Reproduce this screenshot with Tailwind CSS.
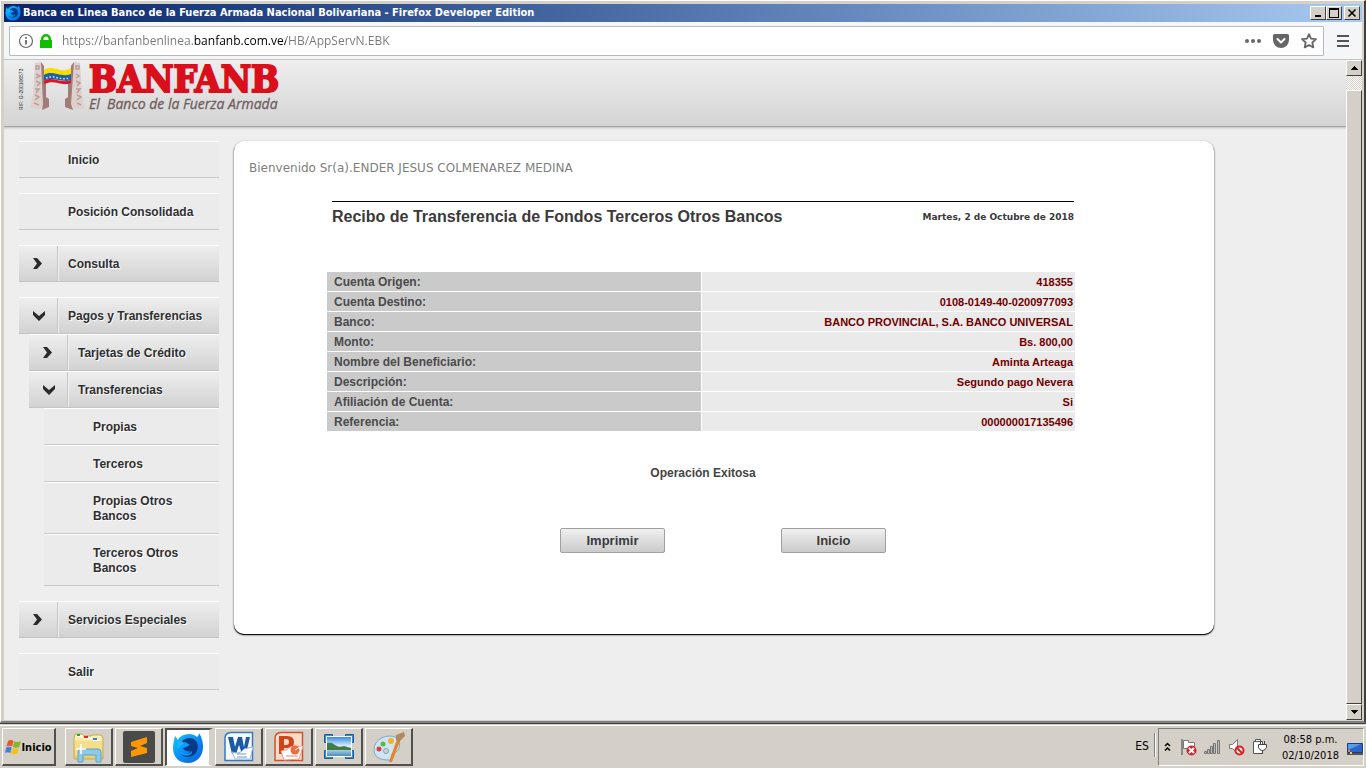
<!DOCTYPE html>
<html lang="es">
<head>
<meta charset="utf-8">
<title>Banca en Linea Banco de la Fuerza Armada Nacional Bolivariana</title>
<script src="https://cdn.jsdelivr.net/npm/@tailwindcss/browser@4"></script>
</head>
<body class="flex h-screen flex-col overflow-hidden bg-[#d4d0c8] font-['Liberation_Sans',sans-serif] text-[#2f2f2f]">
<svg width="0" height="0" class="absolute" aria-hidden="true">
  <defs>
    <linearGradient id="ffb" x1="0" y1="0" x2="1" y2="1"><stop offset="0" stop-color="#19c8ff"/><stop offset=".5" stop-color="#0a8df5"/><stop offset="1" stop-color="#0560d8"/></linearGradient>
    <linearGradient id="folder" x1="0" y1="0" x2="0" y2="1"><stop offset="0" stop-color="#fdf3bb"/><stop offset="1" stop-color="#e9cb62"/></linearGradient>
    <linearGradient id="sky" x1="0" y1="0" x2="0" y2="1"><stop offset="0" stop-color="#2f86e0"/><stop offset=".5" stop-color="#e4f3fb"/><stop offset="1" stop-color="#3f87b5"/></linearGradient>
    <symbol id="firefox" viewBox="0 0 32 32">
      <path fill="url(#ffb)" d="M3 4c1 1 2 2 2.500 4C8 4 12 2 17 2c3 0 6 1 8 3 1-1 2-2 2-4 3 4 4 9 4 14 0 9-6 16-15 16S1 25 1 16c0-4 1-8 2-12z"/>
      <path fill="#073a86" d="M10 9c4-4 11-4 14 0 3 4 2 10-1 13-4 4-11 4-14 0 4 1 8 0 9-3-3 1-6-1-7-3 2-1 5-1 6-3-3 0-5-2-7-4z"/>
      <path fill="#0ba0f8" d="M13 10l5 3-4 1-5 2c0-3 1-5 4-6zM8 19c3 4 9 4 12 0 1 4-7 7-12 2z"/>
      <path fill="#14b6ff" d="M6 8l6 3-5 5-2 1c0-3 0-6 1-9z"/>
    </symbol>
    <symbol id="chev" viewBox="0 0 9 11"><path fill="#2b2b2b" d="M0 0h4l5 5.500L4 11H0l4-5.500z"/></symbol>
    <symbol id="chevdown" viewBox="0 0 12 10"><path fill="#2b2b2b" d="M0 0v4l6 6 6-6V0L6 5z"/></symbol>
  </defs>
</svg>

<div class="flex min-h-0 flex-1 flex-col border-b border-[#404040]">
 <div class="flex min-h-0 flex-1 flex-col border-t border-l border-r-2 border-b-2 border-t-white border-l-white border-r-[#404040] border-b-[#808080] pt-[3px] pr-[2px] pb-px pl-[3px]">
  <!-- title bar -->
  <div class="flex h-[18px] shrink-0 items-center gap-[2px] bg-linear-to-r from-[#0a246a] to-[#a6caf0] pr-[2px] pl-px">
    <svg class="size-4"><use href="#firefox"/></svg>
    <h1 class="flex-1 truncate font-['DejaVu_Sans_Condensed','DejaVu_Sans',sans-serif] text-[11px] font-bold text-white">Banca en Linea Banco de la Fuerza Armada Nacional Bolivariana - Firefox Developer Edition</h1>
    <div class="flex">
      <button aria-label="Minimizar" class="flex h-[14px] w-4 items-center justify-center border border-t-white border-l-white border-r-[#404040] border-b-[#404040] bg-[#d4d0c8]"><svg width="12" height="10"><path d="M3 7h6v2H3z"/></svg></button>
      <button aria-label="Restaurar" class="flex h-[14px] w-4 items-center justify-center border border-t-white border-l-white border-r-[#404040] border-b-[#404040] bg-[#d4d0c8]"><svg width="12" height="10"><path fill-rule="evenodd" d="M1 0h10v10H1zM2 2v7h8V2z"/></svg></button>
      <button aria-label="Cerrar" class="ml-[2px] flex h-[14px] w-4 items-center justify-center border border-t-white border-l-white border-r-[#404040] border-b-[#404040] bg-[#d4d0c8]"><svg width="12" height="10"><path stroke="#000" stroke-width="1.600" d="M2.500 1.500l7 7m0-7l-7 7"/></svg></button>
    </div>
  </div>
  <!-- navigation bar -->
  <div class="flex h-[38px] shrink-0 items-center border-b border-[#c4c4c4] bg-[#f5f6f8] pr-[13px] pl-[5px]">
    <div class="flex h-[30px] flex-1 items-center rounded-[1px] border border-[#b8babc] bg-white pr-2 pl-[7px]">
      <svg class="ml-px size-4" viewBox="0 0 16 16" fill="none" stroke="#6a6a6a"><circle cx="8" cy="8" r="6.500" stroke-width="1.200"/><path stroke-width="1.800" d="M8 7v4.500M8 4v1.800"/></svg>
      <svg class="ml-1 size-4" viewBox="0 0 16 16"><path fill="#12bc00" d="M2 7h1V6a5 5 0 0 1 10 0v1h1v8H2zM5.500 7h5V6a2.500 2.500 0 0 0-5 0z"/></svg>
      <input aria-label="Dirección" class="ml-2 flex-1 bg-[linear-gradient(90deg,#777_132px,#000_132px,#000_224px,#777_224px)] bg-clip-text font-['Open_Sans',sans-serif] text-[12px] leading-5 text-transparent outline-none" value="https://banfanbenlinea.banfanb.com.ve/HB/AppServN.EBK">
      <button aria-label="Acciones de página"><svg width="16" height="16" fill="#666"><circle cx="2" cy="8" r="2"/><circle cx="8" cy="8" r="2"/><circle cx="14" cy="8" r="2"/></svg></button>
      <button aria-label="Guardar en Pocket" class="ml-3"><svg width="16" height="16"><path fill="#666" d="M1.500 1h13A1.500 1.500 0 0 1 16 2.500V7A8 8 0 0 1 0 7V2.500A1.500 1.500 0 0 1 1.500 1z"/><path fill="none" stroke="#fff" stroke-width="2" stroke-linecap="round" stroke-linejoin="round" d="M4.500 6L8 9.500 11.500 6"/></svg></button>
      <button aria-label="Añadir a marcadores" class="ml-3 -mr-[2px]"><svg width="16" height="16"><path fill="none" stroke="#666" stroke-width="1.800" stroke-linejoin="round" d="M8 1.200l2 4.500 5 .5-3.700 3.300 1 4.900L8 12l-4.300 2.400 1-4.900L1 6.200l5-.5z"/></svg></button>
    </div>
    <button aria-label="Abrir menú" class="ml-[13px]"><svg width="12" height="12"><path fill="#555" d="M0 0h12v2H0zM0 5h12v2H0zM0 10h12v2H0z"/></svg></button>
  </div>

  <!-- page -->
  <div class="flex min-h-0 flex-1">
    <div class="min-w-0 flex-1 overflow-hidden bg-[#eee]">
      <header class="flex h-[67px] items-start border-b border-[#a5a5a5] bg-linear-to-b from-[#eee] to-[#d4d4d4] pl-[14px] shadow-[0_1px_2px_#bbb]">
        <a href="#" class="flex pt-[2px]" aria-label="BANFANB, El Banco de la Fuerza Armada">
          <svg width="66" height="50" viewBox="0 0 66 50">
            <text transform="translate(5 48) rotate(-90)" font-size="5" fill="#222">RIF: G-200106573</text>
            <path fill="#ddd0cd" d="M17 1l6-1 2 3 3 39-2 5-14-1 3-12z"/>
            <path fill="#ddd0cd" d="M62 1l-6-1-3 3-3 39 3 5 13-1-2-12z"/>
            <path fill="#a07b78" d="M23 0l3 4v15l2 2v14l3 2v8l-7 3 1-6z"/>
            <path fill="#a07b78" d="M56 0l-3 4v15l-3 2v14l-3 2v8l8 3-2-6z"/>
            <g fill="none" stroke="#b89f9c" stroke-width="1.500"><path d="M18 4h3v3h-3zM18 12l4 2-4 2M18 19l4 2-3 3M17 27h4l-3 4M17 33l4 2-4 3M16 41l5 2"/><path d="M58 4h3v3h-3zM58 12l3 2-3 2M58 19l4 2-3 3M58 27h4l-3 4M59 33l4 2-4 3M59 41l4 2"/></g>
            <path fill="#f9dd00" d="M26 8c4-3 8-2 13-1 5 2 9 2 14-1v7c-4 2-9 1-13 0s-9-2-14 1z"/>
            <path fill="#1b63ae" d="M26 13c4-3 9-2 13-1 5 1 9 2 14 0v6c-5 2-9 0-13 0-5-1-9-2-14 1z"/>
            <path fill="#dc1526" d="M26 19c4-3 9-2 13-1 5 1 9 2 14 0v3c-5 2-9 1-13 0-5-1-9-1-14 1z"/>
            <path fill="none" stroke="#e4edf8" stroke-width="1.500" stroke-dasharray="1.500 2" d="M28 16c6-2 9-1 12 0 4 1 8 1 12 0"/>
          </svg>
          <span class="flex flex-col pl-[5px]">
            <span class="font-['DejaVu_Serif_Condensed','DejaVu_Serif',serif] text-[37px] leading-[35px] font-bold text-[#d90f1c] [-webkit-text-stroke:2px_#d90f1c]">BANFANB</span>
            <span class="font-['Open_Sans',sans-serif] text-[14px] leading-[14px] whitespace-pre text-[#705d5d] italic [-webkit-text-stroke:0.3px_#705d5d]">El  Banco de la Fuerza Armada</span>
          </span>
        </a>
      </header>

      <div class="flex items-start gap-[15px] pt-[14px] pr-4 pl-[15px]">
        <nav class="flex w-[200px] shrink-0 flex-col gap-[15px] text-[12px] leading-[15px] font-bold [text-shadow:1px_1px_1px_#fff]" aria-label="Principal">
          <a href="#" class="block border-t border-b border-t-white border-b-[#c8c8c8] bg-[#ebebeb] pt-[11px] pb-[9px] pl-[49px]">Inicio</a>
          <a href="#" class="block border-t border-b border-t-white border-b-[#c8c8c8] bg-[#ebebeb] pt-[11px] pb-[9px] pl-[49px]">Posición Consolidada</a>
          <a href="#" class="flex border-t border-b border-t-white border-b-[#c4c4c4] bg-linear-to-b from-[#eee] to-[#d2d2d2]"><span class="flex w-[39px] items-center border-r border-[#c8c8c8] pl-[14px]"><svg class="h-[11px] w-[9px]"><use href="#chev"/></svg></span><span class="border-l border-[#eee] pt-[11px] pb-[9px] pl-[9px]">Consulta</span></a>
          <div>
            <a href="#" class="flex border-t border-b border-t-white border-b-[#c4c4c4] bg-linear-to-b from-[#eee] to-[#d2d2d2]"><span class="flex w-[39px] items-center border-r border-[#c8c8c8] pl-[14px]"><svg class="h-[10px] w-3"><use href="#chevdown"/></svg></span><span class="border-l border-[#eee] pt-[11px] pb-[9px] pl-[9px]">Pagos y Transferencias</span></a>
            <div class="ml-[10px]">
              <a href="#" class="flex border-t border-b border-t-white border-b-[#c4c4c4] bg-linear-to-b from-[#eee] to-[#d2d2d2]"><span class="flex w-[39px] items-center border-r border-[#c8c8c8] pl-[14px]"><svg class="h-[11px] w-[9px]"><use href="#chev"/></svg></span><span class="border-l border-[#eee] pt-[11px] pb-[9px] pl-[9px]">Tarjetas de Crédito</span></a>
              <a href="#" class="flex border-t border-b border-t-white border-b-[#c4c4c4] bg-linear-to-b from-[#eee] to-[#d2d2d2]"><span class="flex w-[39px] items-center border-r border-[#c8c8c8] pl-[14px]"><svg class="h-[10px] w-3"><use href="#chevdown"/></svg></span><span class="border-l border-[#eee] pt-[11px] pb-[9px] pl-[9px]">Transferencias</span></a>
              <div class="ml-[15px]">
                <a href="#" class="block border-t border-b border-t-white border-b-[#c8c8c8] bg-[#ebebeb] pt-[11px] pr-7 pb-[9px] pl-[49px]">Propias</a>
                <a href="#" class="block border-t border-b border-t-white border-b-[#c8c8c8] bg-[#ebebeb] pt-[11px] pr-7 pb-[9px] pl-[49px]">Terceros</a>
                <a href="#" class="block border-t border-b border-t-white border-b-[#c8c8c8] bg-[#ebebeb] pt-[11px] pr-7 pb-[9px] pl-[49px]">Propias Otros Bancos</a>
                <a href="#" class="block border-t border-b border-t-white border-b-[#c8c8c8] bg-[#ebebeb] pt-[11px] pr-7 pb-[9px] pl-[49px]">Terceros Otros Bancos</a>
              </div>
            </div>
          </div>
          <a href="#" class="flex border-t border-b border-t-white border-b-[#c4c4c4] bg-linear-to-b from-[#eee] to-[#d2d2d2]"><span class="flex w-[39px] items-center border-r border-[#c8c8c8] pl-[14px]"><svg class="h-[11px] w-[9px]"><use href="#chev"/></svg></span><span class="border-l border-[#eee] pt-[11px] pb-[9px] pl-[9px]">Servicios Especiales</span></a>
          <a href="#" class="block border-t border-b border-t-white border-b-[#c8c8c8] bg-[#ebebeb] pt-[11px] pb-[9px] pl-[49px]">Salir</a>
        </nav>

        <main class="max-w-[980px] flex-1 rounded-[10px] bg-white px-[15px] pt-5 pb-[81px] shadow-[0_1px_0_#111,0_1px_2px_#222]">
          <p class="font-['DejaVu_Sans',sans-serif] text-[12px] leading-[14px] text-[#808080]">Bienvenido Sr(a).ENDER JESUS COLMENAREZ MEDINA</p>
          <div class="mt-[26px] mr-[124px] ml-[78px]">
            <div class="mr-px ml-[5px] flex items-center justify-between border-t border-black pt-[5px] text-[#3a3a3a]">
              <h2 class="text-[16px] leading-5 font-bold">Recibo de Transferencia de Fondos Terceros Otros Bancos</h2>
              <p class="font-['DejaVu_Sans',sans-serif] text-[9px] leading-5 font-bold">Martes, 2 de Octubre de 2018</p>
            </div>
            <table class="mt-[45px] w-full table-fixed border-collapse text-[12px] leading-[18px] font-bold">
              <tbody class="[&_td]:bg-[#eaeaea] [&_td]:pt-px [&_td]:pr-[2px] [&_td]:text-right [&_td]:text-[11px] [&_td]:text-[#700000] [&_th]:border-r [&_th]:border-r-white [&_th]:bg-[#cacaca] [&_th]:pt-px [&_th]:pl-[7px] [&_th]:text-left [&_th]:text-[#4a4a4a] [&_tr]:border-b [&_tr]:border-white">
                <tr><th scope="row">Cuenta Origen:</th><td>418355</td></tr>
                <tr><th scope="row">Cuenta Destino:</th><td>0108-0149-40-0200977093</td></tr>
                <tr><th scope="row">Banco:</th><td>BANCO PROVINCIAL, S.A. BANCO UNIVERSAL</td></tr>
                <tr><th scope="row">Monto:</th><td>Bs. 800,00</td></tr>
                <tr><th scope="row">Nombre del Beneficiario:</th><td>Aminta Arteaga</td></tr>
                <tr><th scope="row">Descripción:</th><td>Segundo pago Nevera</td></tr>
                <tr><th scope="row">Afiliación de Cuenta:</th><td>Si</td></tr>
                <tr><th scope="row">Referencia:</th><td>000000017135496</td></tr>
              </tbody>
            </table>
            <p class="mt-[31px] pl-1 text-center text-[12px] leading-5 font-bold text-[#444]">Operación Exitosa</p>
            <div class="mt-[45px] flex justify-center gap-[116px] pl-[44px]">
              <button class="h-[25px] w-[105px] rounded-[2px] border border-[#a0a0a0] bg-linear-to-b from-[#f0f0f0] to-[#cbcbcb] text-[13px] font-bold text-[#3a3a3a]">Imprimir</button>
              <button class="h-[25px] w-[105px] rounded-[2px] border border-[#a0a0a0] bg-linear-to-b from-[#f0f0f0] to-[#cbcbcb] text-[13px] font-bold text-[#3a3a3a]">Inicio</button>
            </div>
          </div>
        </main>
      </div>
    </div>
    <!-- scroll bar -->
    <div class="flex w-4 shrink-0 flex-col bg-[repeating-conic-gradient(#fff_0_25%,#d4d0c8_0_50%)] bg-size-[2px_2px]">
      <button aria-label="Subir" class="flex h-4 items-center justify-center border border-t-white border-l-white border-r-[#404040] border-b-[#404040] bg-[#d4d0c8]"><svg width="7" height="4"><path d="M3 0h1v1h1v1h1v1h1v1H0V3h1V2h1V1h1z"/></svg></button>
      <div class="mt-[14px] flex-1 border border-t-white border-l-white border-r-[#404040] border-b-[#404040] bg-[#d4d0c8]"></div>
      <button aria-label="Bajar" class="flex h-4 items-center justify-center border border-t-white border-l-white border-r-[#404040] border-b-[#404040] bg-[#d4d0c8]"><svg width="7" height="4"><path d="M0 0h7v1H6v1H5v1H4v1H3V3H2V2H1V1H0z"/></svg></button>
    </div>
  </div>
 </div>
</div>

<!-- task bar -->
<footer class="mt-px flex h-[43px] shrink-0 items-start border-t border-white pt-[2px] pr-[2px] pl-[2px] font-['DejaVu_Sans_Condensed','DejaVu_Sans',sans-serif] text-[11px]">
  <button class="flex h-[38px] w-[54px] items-center justify-center border border-t-white border-l-white border-r-2 border-b-2 border-r-[#505050] border-b-[#505050] pt-1 font-bold text-black">
    <svg width="16" height="16" class="mb-1"><path fill="#e8562a" d="M3 2c2-1.500 4-1 5.500 0L7 7.500C5.500 6.500 3.500 6.500 1.500 7.500z"/><path fill="#82b928" d="M9.300 2.200c2 1 4 1 6.700 0L14.300 8c-2 1-4 1-6.500 0z"/><path fill="#3d82d8" d="M1.200 8.500c2-1 4-1 5.500 0L5.300 14C3.800 13 2 13 0 14z"/><path fill="#f9bd1c" d="M7.500 8.900c2 1 4 1 6.500 0L12.500 14.500c-2 1-4 1-6.500 0z"/></svg>Inicio</button>
  <div class="ml-[9px] flex gap-[2px] [&>button]:flex [&>button]:h-[38px] [&>button]:w-12 [&>button]:items-center [&>button]:justify-center">
    <button aria-label="Explorador" class="border border-t-white border-l-white border-r-2 border-b-2 border-r-[#505050] border-b-[#505050]"><svg width="34" height="32"><path fill="url(#folder)" stroke="#c9a94e" d="M2 7l1-4h7l1 2h8l1-1h9l2 3v21H2z"/><path fill="#fff" d="M5 4h6v2H5zM13 6h7v2h-7zM21 8h7v2h-7z"/><path fill="#1fae2d" d="M5 3h3v2H5z"/><path fill="#d93025" d="M12 5h4v2h-4z"/><path fill="#2a86e0" d="M21 7h4v2h-4z"/><path fill="#f6df8b" d="M3 10h27v14H3z"/><path fill="#8fc9e8" stroke="#5ba3cc" d="M6 31V21q0-3 3-3h17q3 0 3 3v10h-5v-7H11v7z"/><path stroke="#fff" stroke-width="1.500" d="M4 18h10M9 13v10"/></svg></button>
    <button aria-label="Sublime Text" class="border border-t-white border-l-white border-r-2 border-b-2 border-r-[#505050] border-b-[#505050]"><svg width="32" height="32"><rect width="32" height="32" rx="2" fill="#4a4a4a"/><path fill="#ff9800" d="M8 11l16-5v6l-7 3 7 2v5L8 26v-6l7-3-7-2z"/></svg></button>
    <button aria-label="Firefox Developer Edition" class="border-t-2 border-r-4 border-b border-l-2 border-t-[#505050] border-r-[#d4d0c8] border-b-white border-l-[#505050] bg-white"><svg class="size-8"><use href="#firefox"/></svg></button>
    <button aria-label="Word" class="border border-t-white border-l-white border-r-2 border-b-2 border-r-[#505050] border-b-[#505050]"><svg width="32" height="32"><path fill="#f5f9fd" stroke="#3a77bd" stroke-width="1.500" d="M8 1.500h21.500v28H2V7q0-5 6-5.500z"/><path fill="#1c5aa8" d="M5 6h5l2 10 3-10h4l2 10 2-10h4l-4 17h-4l-3-9-3 9H9z"/><path fill="#fff" stroke="#9ab6d8" d="M9 21q8 3 12-3l9-2-3 12H12z"/><path stroke="#7796bf" d="M14 23h9M14 26h10"/></svg></button>
    <button aria-label="PowerPoint" class="border border-t-white border-l-white border-r-2 border-b-2 border-r-[#505050] border-b-[#505050]"><svg width="32" height="32"><path fill="#fbdccd" stroke="#d0522b" stroke-width="1.500" d="M8 1.500h21.500v28H2V7q0-5 6-5.500z"/><path fill="#cd4519" fill-rule="evenodd" d="M6 5h8q7 0 7 6t-7 6h-3v6H6zM11 8v6h2q3 0 3-3t-3-3z"/><path fill="#fff" stroke="#e3a48e" d="M8 20q6 0 9-4l13-1-4 13-15 1z"/><circle cx="22" cy="19" r="4.500" fill="#ea6c40"/><path stroke="#fff" d="M22 19l5-3"/><path stroke="#e38b6c" d="M13 25h12"/></svg></button>
    <button aria-label="Visor de imágenes" class="border border-t-white border-l-white border-r-2 border-b-2 border-r-[#505050] border-b-[#505050]"><svg width="32" height="32"><path fill="#3f8bcb" stroke="#1f5c96" d="M1.500 3.500h8v4h-4v4h-4zM22.500 3.500h8v8h-4v-4h-4zM1.500 19.500h4v4h4v4h-8zM26.500 19.500h4v8h-8v-4h4z"/><path fill="url(#sky)" stroke="#fff" d="M3.500 5.500h25v20h-25z"/><path fill="#3f7d45" d="M4 12q5-1 8 2t9 1l7 2v2H4z"/></svg></button>
    <button aria-label="Paint" class="border border-t-white border-l-white border-r-2 border-b-2 border-r-[#505050] border-b-[#505050]"><svg width="34" height="32"><path fill="#cfe5f3" stroke="#7ea6c2" d="M2 19C2 10 10 5 18 5s11 6 9 12-5 2-7 6 1 6-4 6C8 29 2 26 2 19z"/><circle cx="7" cy="18" r="2.500" fill="#d9403a"/><circle cx="11" cy="13" r="2.500" fill="#58b947"/><circle cx="19" cy="10" r="3" fill="#f0b323"/><circle cx="14" cy="20" r="2.500" fill="#d4d0c8" stroke="#7ea6c2"/><path fill="#e8822a" d="M25 8l3 2-8 21-3 0z"/><path fill="#b08a5e" d="M24 4l8-3 1 4-6 6-3-2z"/></svg></button>
  </div>
  <span class="ml-auto pt-[9px] pr-[5px] text-[12px] text-black">ES</span>
  <div class="mt-[5px] h-6 w-[2px] border-l border-[#808080] bg-white"></div>
  <div class="ml-[2px] flex h-[38px] items-center border border-t-[#808080] border-l-[#808080] border-r-white border-b-white pl-[5px] text-black">
    <button aria-label="Mostrar iconos ocultos"><svg width="7" height="10"><path fill="none" stroke="#000" stroke-width="1.500" d="M1 4l2.500-2.500L6 4M1 8.500L3.500 6 6 8.500"/></svg></button>
    <svg class="ml-[9px]" width="17" height="18"><path fill="#888" d="M1 1h2v16H1z"/><path fill="#fff" stroke="#777" d="M3.500 2.500h5v2h6v7h-6v-1h-5z"/><circle cx="11.500" cy="12.500" r="5" fill="#d8232a"/><path stroke="#fff" stroke-width="2" d="M9 10l5 5m0-5l-5 5"/></svg>
    <svg class="ml-[7px]" width="17" height="16"><path fill="#b8b8b8" stroke="#777" d="M.5 12.500h2v2h-2zM3.500 10.500h2v4h-2zM6.500 7.500h2v7h-2zM9.500 4.500h2v10h-2zM13.500 1.500h2v13h-2z"/></svg>
    <svg class="ml-[7px]" width="18" height="18"><path fill="#fff" stroke="#777" d="M1.500 6.500h3l5-5v14l-5-5h-3z"/><circle cx="11.500" cy="12.500" r="4" fill="#fff" stroke="#e01b1b" stroke-width="2"/><path stroke="#e01b1b" stroke-width="2" d="M9 10l5 5"/></svg>
    <svg class="ml-[6px]" width="18" height="18"><path fill="#fff" stroke="#555" d="M1.500 3.500h9v12h-9zM3.500 1.500h5v2h-5z"/><path fill="#fff" stroke="#444" d="M6.500 6.500h8v3q-1 3-4 3t-4-3zM8.500 3v3M12.500 3v3M10.500 12v3.500h-4"/></svg>
    <time class="ml-3 pt-px text-center text-[11px] leading-4">08:58 p.m.<br>02/10/2018</time>
    <svg class="mt-1 ml-2" width="16" height="14"><path fill="#2c66c8" stroke="#1c3c78" d="M.5 1.500h15v9H.5z"/><path fill="#5d9aeb" d="M1 2h13L1 8z"/><path fill="#555" d="M0 11h16v2H0z"/><path fill="#e74" d="M1 8h2v2H1z"/><path fill="#fc3" d="M3 10h2v2H3z"/></svg>
  </div>
</footer>
</body>
</html>
